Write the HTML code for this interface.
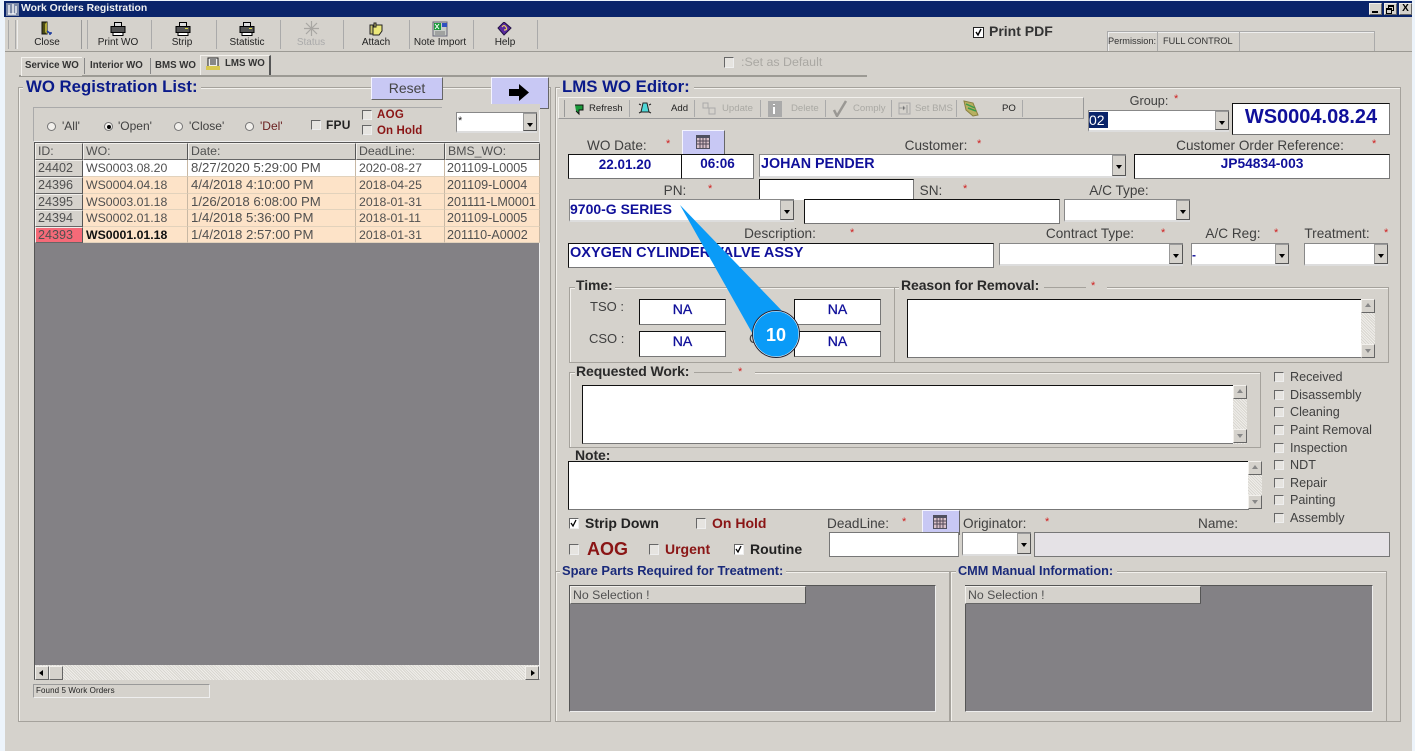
<!DOCTYPE html>
<html><head><meta charset="utf-8"><style>
html,body{margin:0;padding:0}
body{width:1415px;height:751px;overflow:hidden;position:relative;background:#d5d2cc;font-family:"Liberation Sans",sans-serif;color:#333}
div,span.a,svg{position:absolute}
.t{position:absolute;white-space:nowrap;font-size:12px;line-height:14px;color:#404040}
.l{font-size:13.6px}
.k{font-size:12.6px}
.g{font-size:14px;font-weight:bold;color:#2a2a2a;letter-spacing:-.1px}
.c{transform:translateX(-50%)}
.s{font-size:9.6px;color:#222}
.d{font-size:9.6px;color:#aaa9a4}
.r{color:#d02020;font-size:11px}
.b{color:#10109a;font-weight:bold}
.in{background:#fff;border:1px solid #111;border-right-color:#777;border-bottom-color:#777;box-sizing:border-box}
.sel{background:#fff;box-sizing:border-box;border-top:1px solid #888;border-left:1px solid #888;border-bottom:2px solid #ddd}
.sel i{position:absolute;right:0;top:0;bottom:0;width:14px;background:#d5d2cc;border:1px solid #999;box-sizing:border-box;border-right-color:#555;border-bottom-color:#555}
.sel i:after{content:"";position:absolute;left:3px;top:9px;border:3px solid transparent;border-top:4px solid #000}
.gb{box-sizing:border-box;border:1px solid #a5a29c;box-shadow:inset 1px 1px 0 #f2f0ec}
.bg{background:#d5d2cc}
.ln{background:#9c9a94}
.btn{background:#c8c8f4;box-sizing:border-box;border:1px solid;border-color:#f4f4ff #666 #666 #f4f4ff}
.cb{width:9px;height:9px;box-sizing:border-box;background:#e6e4e0;border:1px solid;border-color:#666 #eee #eee #666}
.cb.w{background:#fff}
.sb{background:#e4e2de;background-image:repeating-linear-gradient(45deg,#f0eeea 0 1px,#d8d6d0 1px 2px)}
.ar{background:#d5d2cc;box-sizing:border-box;border:1px solid;border-color:#f2f0ec #666 #666 #f2f0ec}
.cell{box-sizing:border-box;border-right:1px solid #c8b8a4;border-bottom:1px solid #e2d2bc;font-size:12.3px;line-height:16px;padding-left:3px;white-space:nowrap;color:#505050;background:#fde3c8}
.dt{font-size:13.2px}
.bm{font-size:12.6px;padding-left:2px}
.hd{box-sizing:border-box;background:#d5d2cc;border:1px solid;border-color:#f2f0ec #555 #666 #f2f0ec;font-size:12.3px;line-height:15px;padding-left:2px;color:#505050}
.id{box-sizing:border-box;background:#d5d2cc;border:1px solid;border-color:#f2f0ec #555 #666 #f2f0ec;font-size:12.6px;line-height:15px;padding-left:2px;color:#505050}
.rad{width:9px;height:9px;border-radius:50%;background:#f2f0ec;border:1px solid #777;box-sizing:border-box}
.na{font-size:14px;font-weight:normal;-webkit-text-stroke:.3px #10109a}
</style></head><body>
<div style="left:0;top:0;width:5px;height:751px;background:#edf4fb"></div>
<div style="left:1412px;top:0;width:3px;height:751px;background:#edf4fb"></div>
<div style="left:4px;top:1px;width:1408px;height:16px;background:#0a246a"></div>
<div style="left:0;top:0;width:1415px;height:1px;background:#edf4fb"></div>
<svg style="left:6px;top:3px" width="14" height="13"><rect x="0" y="0" width="13" height="13" fill="#7d8aa8"/><path d="M3 2v9M7 1v10M10 3v7M2 11h8" stroke="#fff" stroke-width="1.3" fill="none"/></svg>
<div class="t" style="left:21px;top:2px;color:#f0f0f0;font-weight:bold;font-size:10.4px">Work Orders Registration</div>
<div class="ar" style="left:1369px;top:3px;width:13px;height:12px;background:#d5d2cc"><div style="left:2px;bottom:1px;width:6px;height:2px;background:#000"></div></div>
<div class="ar" style="left:1384px;top:3px;width:13px;height:12px"><div style="left:3px;top:1px;width:6px;height:6px;border:1px solid #000;border-top-width:2px;box-sizing:border-box"></div><div style="left:1px;top:4px;width:6px;height:6px;border:1px solid #000;border-top-width:2px;background:#d5d2cc;box-sizing:border-box"></div></div>
<div class="ar" style="left:1399px;top:3px;width:13px;height:12px;font:bold 10px/10px 'Liberation Sans';color:#000;text-align:center">X</div>

<!-- toolbar -->
<div class="ln" style="left:5px;top:51px;width:1407px;height:1px"></div>
<div style="left:8px;top:20px;width:1px;height:29px;background:#aaa"></div>
<div style="left:15px;top:20px;width:1px;height:29px;background:#aaa"></div>
<div style="left:17px;top:20px;width:1px;height:29px;background:#eee"></div>
<div style="left:81px;top:20px;width:1px;height:29px;background:#999"></div>
<div style="left:87px;top:20px;width:1px;height:29px;background:#aaa"></div>
<div style="left:151px;top:20px;width:1px;height:29px;background:#aaa"></div>
<div style="left:216px;top:20px;width:1px;height:29px;background:#aaa"></div>
<div style="left:280px;top:20px;width:1px;height:29px;background:#aaa"></div>
<div style="left:343px;top:20px;width:1px;height:29px;background:#aaa"></div>
<div style="left:409px;top:20px;width:1px;height:29px;background:#aaa"></div>
<div style="left:473px;top:20px;width:1px;height:29px;background:#aaa"></div>
<div style="left:537px;top:20px;width:1px;height:29px;background:#aaa"></div>

<svg style="left:39px;top:21px" width="16" height="16"><path d="M3 1h5v12H3z" fill="#4a4a14" stroke="#111"/><path d="M8 1l-2 2v8l2 2z" fill="#b0a838"/><path d="M8 10l4 3M12 13l-2 0M12 13l0-2" stroke="#2240a0" stroke-width="1.5" fill="none"/></svg>
<svg style="left:110px;top:22px" width="16" height="14"><path d="M4.500 .500h7v4h-7z" fill="#ddd" stroke="#000"/><path d="M1 4.500h14v6H1z" fill="#555" stroke="#000"/><path d="M3 10.500h10v3H3z" fill="#fff" stroke="#000"/></svg>
<svg style="left:175px;top:22px" width="16" height="14"><path d="M4.500 .500h7v4h-7z" fill="#ddd" stroke="#000"/><path d="M1 4.500h14v6H1z" fill="#555" stroke="#000"/><path d="M3 10.500h10v3H3z" fill="#fff" stroke="#000"/><path d="M10 6h3v1h-3z" fill="#dd4"/></svg>
<svg style="left:239px;top:22px" width="16" height="14"><path d="M4.500 .500h7v4h-7z" fill="#ddd" stroke="#000"/><path d="M1 4.500h14v6H1z" fill="#555" stroke="#000"/><path d="M3 10.500h10v3H3z" fill="#fff" stroke="#000"/><path d="M10 6h3v1h-3z" fill="#dd4"/></svg>
<svg style="left:304px;top:21px" width="15" height="15"><path d="M7.500 0v15M0 7.500h15M2 2l11 11M13 2L2 13" stroke="#a8a6a2" stroke-width="1.2"/></svg>
<svg style="left:368px;top:22px" width="16" height="15"><path d="M5 3h9v6l-3 4H5z" fill="#ece87a" stroke="#222"/><path d="M2 3h3v9H2zM6 1h2v4H6z" fill="#c8c470" stroke="#222"/></svg>
<svg style="left:432px;top:21px" width="16" height="16"><rect x="1" y="1" width="14" height="14" fill="#c8ccc8" stroke="#667"/><rect x="2" y="2" width="7" height="7" fill="#1a9a3a"/><path d="M3 3l4 5M7 3l-4 5" stroke="#fff"/><rect x="10" y="2" width="5" height="4" fill="#3050c0"/><path d="M3 11h10M3 13h10" stroke="#777"/></svg>
<svg style="left:497px;top:22px" width="15" height="14"><path d="M7 0l7 6-7 7-6-7z" fill="#5a2aa0" stroke="#221144"/><path d="M5 5q2-3 4 0t-2 3" stroke="#e8d060" fill="none" stroke-width="1.2"/></svg>

<div class="t s c" style="left:47px;top:36px;font-size:10px">Close</div>
<div class="t s c" style="left:118px;top:36px;font-size:10px">Print WO</div>
<div class="t s c" style="left:182px;top:36px;font-size:10px">Strip</div>
<div class="t s c" style="left:247px;top:36px;font-size:10px">Statistic</div>
<div class="t s c" style="left:311px;top:36px;color:#aaa;font-size:10px">Status</div>
<div class="t s c" style="left:376px;top:36px;font-size:10px">Attach</div>
<div class="t s c" style="left:440px;top:36px;font-size:10px">Note Import</div>
<div class="t s c" style="left:505px;top:36px;font-size:10px">Help</div>

<div class="cb w" style="left:973px;top:27px;width:11px;height:11px;border:1px solid #222"></div>
<svg style="left:973px;top:27px" width="11" height="11"><path d="M3 5l2 3 3-6" stroke="#000" stroke-width="1.4" fill="none"/></svg>
<div class="t" style="left:989px;top:24px;font-size:14px;font-weight:bold;color:#333">Print PDF</div>
<div style="left:1107px;top:31px;width:268px;height:20px;box-sizing:border-box;border:1px solid #aaa;border-bottom:0;box-shadow:inset 1px 1px 0 #eee"></div>
<div style="left:1157px;top:31px;width:1px;height:20px;background:#aaa"></div>
<div style="left:1239px;top:31px;width:1px;height:20px;background:#aaa"></div>
<div class="t" style="left:1108px;top:34px;font-size:9.2px;color:#333">Permission:</div>
<div class="t" style="left:1163px;top:34px;font-size:9.2px;color:#333">FULL CONTROL</div>

<div class="cb" style="left:724px;top:57px;width:10px;height:11px"></div>
<div class="t" style="left:741px;top:55px;color:#aaa8a3;font-size:12.4px">:Set as Default</div>

<!-- tabs -->
<div class="ln" style="left:19px;top:75px;width:848px;height:2px"></div>
<div style="left:21px;top:57px;width:60px;height:18px;background:#d5d2cc;border-top:1px solid #f2f0ec;border-left:1px solid #f2f0ec"></div>
<div style="left:84px;top:58px;width:1px;height:16px;background:#888"></div>
<div style="left:150px;top:58px;width:1px;height:16px;background:#888"></div>
<div style="left:200px;top:55px;width:71px;height:20px;box-sizing:border-box;border:1px solid #f2f0ec;border-right:2px solid #555;border-bottom:0"></div>
<div class="t" style="left:25px;top:59px;font-size:9.7px;font-weight:bold;color:#333">Service WO</div>
<div class="t" style="left:90px;top:59px;font-size:9.7px;font-weight:bold;color:#333">Interior WO</div>
<div class="t" style="left:155px;top:59px;font-size:9.7px;font-weight:bold;color:#333">BMS WO</div>
<div class="t" style="left:225px;top:57px;font-size:9.7px;font-weight:bold;color:#333">LMS WO</div>
<svg style="left:206px;top:57px" width="14" height="13"><rect x="2" y="1" width="10" height="9" fill="#eee" stroke="#222"/><path d="M4 3h6M4 5h6M4 7h6" stroke="#222"/><rect x="0" y="9" width="14" height="4" fill="#d8c850"/></svg>

<!-- left group -->
<div class="gb" style="left:18px;top:87px;width:533px;height:635px"></div>
<div class="bg" style="left:23px;top:80px;width:178px;height:14px"></div>
<div class="t" style="left:26px;top:78px;font-size:16.8px;line-height:18px;font-weight:bold;color:#0a1a8a">WO Registration List:</div>
<div class="btn" style="left:371px;top:77px;width:72px;height:23px"></div>
<div class="t c" style="left:407px;top:81px;font-size:14px;color:#444">Reset</div>
<div class="btn" style="left:491px;top:77px;width:58px;height:32px"></div>
<svg style="left:509px;top:84px" width="20" height="17"><path d="M0 5h10V0l10 8.500L10 17v-5H0z" fill="#000"/></svg>

<div style="left:33px;top:107px;width:507px;height:35px;box-sizing:border-box;border:1px solid #bbb9b3;border-color:#aaa #eee #eee #aaa"></div>
<div class="rad" style="left:47px;top:122px"></div>
<div class="t" style="left:62px;top:119px">'All'</div>
<div class="rad" style="left:104px;top:122px"></div>
<div style="left:106.500px;top:124.500px;width:4px;height:4px;border-radius:50%;background:#000"></div>
<div class="t" style="left:118px;top:119px">'Open'</div>
<div class="rad" style="left:174px;top:122px"></div>
<div class="t" style="left:189px;top:119px">'Close'</div>
<div class="rad" style="left:245px;top:122px"></div>
<div class="t" style="left:260px;top:119px;color:#6a2020">'Del'</div>
<div class="cb" style="left:311px;top:120px;width:10px;height:10px"></div>
<div class="t" style="left:326px;top:118px;font-weight:bold;color:#222;letter-spacing:.2px">FPU</div>
<div class="cb" style="left:362px;top:110px;width:10px;height:10px"></div>
<div class="t" style="left:377px;top:108px;font-weight:bold;font-size:11.5px;color:#8a1515;letter-spacing:.3px">AOG</div>
<div class="cb" style="left:362px;top:125px;width:10px;height:10px"></div>
<div class="t" style="left:377px;top:124px;font-weight:bold;font-size:11.5px;color:#8a1515;letter-spacing:.1px">On Hold</div>
<div class="bg" style="left:442px;top:104px;width:98px;height:6px"></div>
<div class="sel" style="left:456px;top:112px;width:81px;height:21px"><i></i></div>
<div class="t" style="left:458px;top:114px;font-size:11px;color:#222">*</div>

<!-- grid -->
<div style="left:34px;top:142px;width:506px;height:538px;background:#838185;box-sizing:border-box;border:1px solid #555;border-right-color:#eee;border-bottom-color:#777"></div>
<div class="hd" style="left:35px;top:143px;width:48px;height:17px">ID:</div>
<div class="hd" style="left:83px;top:143px;width:105px;height:17px">WO:</div>
<div class="hd" style="left:188px;top:143px;width:168px;height:17px">Date:</div>
<div class="hd" style="left:356px;top:143px;width:89px;height:17px">DeadLine:</div>
<div class="hd" style="left:445px;top:143px;width:95px;height:17px">BMS_WO:</div>

<div class="id" style="left:35px;top:160px;width:48px;height:17px">24402</div>
<div class="cell" style="left:83px;top:160px;width:105px;height:17px;background:#fff">WS0003.08.20</div>
<div class="cell dt" style="left:188px;top:160px;width:168px;height:17px;background:#fff">8/27/2020 5:29:00 PM</div>
<div class="cell" style="left:356px;top:160px;width:89px;height:17px;background:#fff">2020-08-27</div>
<div class="cell bm" style="left:445px;top:160px;width:95px;height:17px;background:#fff">201109-L0005</div>

<div class="id" style="left:35px;top:177px;width:48px;height:17px">24396</div>
<div class="cell" style="left:83px;top:177px;width:105px;height:17px">WS0004.04.18</div>
<div class="cell dt" style="left:188px;top:177px;width:168px;height:17px">4/4/2018 4:10:00 PM</div>
<div class="cell" style="left:356px;top:177px;width:89px;height:17px">2018-04-25</div>
<div class="cell bm" style="left:445px;top:177px;width:95px;height:17px">201109-L0004</div>

<div class="id" style="left:35px;top:194px;width:48px;height:16px">24395</div>
<div class="cell" style="left:83px;top:194px;width:105px;height:16px">WS0003.01.18</div>
<div class="cell dt" style="left:188px;top:194px;width:168px;height:16px">1/26/2018 6:08:00 PM</div>
<div class="cell" style="left:356px;top:194px;width:89px;height:16px">2018-01-31</div>
<div class="cell bm" style="left:445px;top:194px;width:95px;height:16px">201111-LM0001</div>

<div class="id" style="left:35px;top:210px;width:48px;height:17px">24394</div>
<div class="cell" style="left:83px;top:210px;width:105px;height:17px">WS0002.01.18</div>
<div class="cell dt" style="left:188px;top:210px;width:168px;height:17px">1/4/2018 5:36:00 PM</div>
<div class="cell" style="left:356px;top:210px;width:89px;height:17px">2018-01-11</div>
<div class="cell bm" style="left:445px;top:210px;width:95px;height:17px">201109-L0005</div>

<div class="id" style="left:35px;top:227px;width:48px;height:16px;background:#f56a78">24393</div>
<div class="cell" style="left:83px;top:227px;width:105px;height:16px;font-weight:bold;color:#111">WS0001.01.18</div>
<div class="cell dt" style="left:188px;top:227px;width:168px;height:16px">1/4/2018 2:57:00 PM</div>
<div class="cell" style="left:356px;top:227px;width:89px;height:16px">2018-01-31</div>
<div class="cell bm" style="left:445px;top:227px;width:95px;height:16px">201110-A0002</div>

<div class="sb" style="left:35px;top:665px;width:504px;height:15px"></div>
<div class="ar" style="left:35px;top:666px;width:14px;height:14px"><div style="left:3px;top:3px;border:3px solid transparent;border-right:4px solid #000;border-left:0"></div></div>
<div class="ar" style="left:49px;top:666px;width:14px;height:14px"></div>
<div class="ar" style="left:525px;top:666px;width:14px;height:14px"><div style="left:5px;top:3px;border:3px solid transparent;border-left:4px solid #000;border-right:0"></div></div>
<div style="left:33px;top:684px;width:177px;height:14px;box-sizing:border-box;border:1px solid;border-color:#999 #eee #eee #999"></div>
<div class="t" style="left:36px;top:684px;font-size:8px;color:#222;letter-spacing:.1px">Found 5 Work Orders</div>

<!-- right group -->
<div class="gb" style="left:555px;top:87px;width:846px;height:635px"></div>
<div class="bg" style="left:560px;top:80px;width:134px;height:14px"></div>
<div class="t" style="left:562px;top:78px;font-size:16.8px;line-height:18px;font-weight:bold;color:#0a1a8a">LMS WO Editor:</div>

<!-- editor toolbar -->
<div style="left:558px;top:97px;width:526px;height:22px;box-sizing:border-box;border:1px solid;border-color:#f2f0ec #999 #999 #f2f0ec"></div>
<div style="left:564px;top:100px;width:1px;height:17px;background:#999"></div>
<div style="left:629px;top:100px;width:1px;height:17px;background:#aaa"></div>
<div style="left:694px;top:100px;width:1px;height:17px;background:#aaa"></div>
<div style="left:760px;top:100px;width:1px;height:17px;background:#aaa"></div>
<div style="left:825px;top:100px;width:1px;height:17px;background:#aaa"></div>
<div style="left:891px;top:100px;width:1px;height:17px;background:#aaa"></div>
<div style="left:956px;top:100px;width:1px;height:17px;background:#aaa"></div>
<div style="left:1022px;top:100px;width:1px;height:17px;background:#aaa"></div>
<svg style="left:573px;top:102px" width="12" height="14"><path d="M2 3h8v5H6v4L3 9" fill="#1a9a3a" stroke="#111"/></svg>
<svg style="left:638px;top:101px" width="14" height="14"><path d="M5 2h4l2 9H3z" fill="#50d8d8" stroke="#222"/><path d="M1 3l2 1M13 3l-2 1M1 12l2-1M13 12l-2-1" stroke="#222"/></svg>
<svg style="left:702px;top:102px" width="14" height="13"><path d="M1 1h5v5H1zM7 6h6v6H7z" fill="#d5d2cc" stroke="#aaa"/></svg>
<svg style="left:767px;top:100px" width="15" height="17"><rect x="1" y="1" width="14" height="16" fill="#aaa"/><path d="M7 4v1M7 7v7" stroke="#fff" stroke-width="2"/></svg>
<svg style="left:832px;top:100px" width="16" height="17"><path d="M2 10l3 6 9-15" stroke="#9a9894" stroke-width="2.500" fill="none"/></svg>
<svg style="left:898px;top:102px" width="13" height="13"><path d="M1 1h11v11H1z" fill="#d5d2cc" stroke="#aaa"/><path d="M1 6h6M5 4l2 2-2 2M9 3v8" stroke="#999"/></svg>
<svg style="left:963px;top:100px" width="16" height="17"><path d="M1 1l9 2 5 12-5 1L3 10z" fill="#b8b060" stroke="#8a8040"/><path d="M3 4l9 4M5 8l8 3" stroke="#3a9a4a" stroke-width="1.500"/></svg>
<div class="t s" style="left:589px;top:102px">Refresh</div>
<div class="t s" style="left:671px;top:102px">Add</div>
<div class="t d" style="left:722px;top:102px">Update</div>
<div class="t d" style="left:791px;top:102px">Delete</div>
<div class="t d" style="left:853px;top:102px">Comply</div>
<div class="t d" style="left:915px;top:102px">Set BMS</div>
<div class="t s" style="left:1002px;top:102px">PO</div>

<div class="t c" style="left:1149px;top:94px;font-size:12.7px">Group:</div>
<div class="t r" style="left:1174px;top:92px">*</div>
<div class="sel" style="left:1088px;top:110px;width:141px;height:22px"><i></i></div>
<div style="left:1089px;top:112px;width:19px;height:16px;background:#0a246a;color:#fff;font-size:14px;line-height:16px">02</div>
<div class="in" style="left:1232px;top:103px;width:158px;height:32px;text-align:center;font-weight:bold;font-size:20px;line-height:27px;color:#10109a">WS0004.08.24</div>

<div class="t l" style="left:587px;top:139px">WO Date:</div>
<div class="t r" style="left:666px;top:137px">*</div>
<div class="btn" style="left:682px;top:130px;width:43px;height:25px"></div>
<svg style="left:696px;top:135px" width="14" height="14"><rect width="14" height="14" fill="#505060"/><rect x="1" y="3" width="12" height="10" fill="#d8c0c8"/><path d="M1 6h12M1 9h12M4 3v10M7 3v10M10 3v10" stroke="#504858"/></svg>
<div class="in" style="left:568px;top:154px;width:114px;height:25px;text-align:center;font-size:14px;line-height:18px" ><span class="b" style="font-size:13.5px">22.01.20</span></div>
<div class="in" style="left:681px;top:154px;width:73px;height:25px;text-align:center;line-height:18px"><span class="b" style="font-size:13.5px">06:06</span></div>
<div class="t c l" style="left:936px;top:139px">Customer:</div>
<div class="t r" style="left:977px;top:137px">*</div>
<div class="sel" style="left:759px;top:154px;width:367px;height:24px"><i></i></div>
<div class="t b" style="left:761px;top:156px;font-size:14.3px;line-height:17px">JOHAN PENDER</div>
<div class="t c l" style="left:1260px;top:139px">Customer Order Reference:</div>
<div class="t r" style="left:1372px;top:137px">*</div>
<div class="in" style="left:1134px;top:154px;width:256px;height:25px;text-align:center;line-height:18px"><span class="b" style="font-size:13.8px">JP54834-003</span></div>

<div class="t c l" style="left:675px;top:184px">PN:</div>
<div class="t r" style="left:708px;top:182px">*</div>
<div class="in" style="left:759px;top:179px;width:155px;height:21px;border-bottom:0"></div>
<div class="t c l" style="left:931px;top:184px">SN:</div>
<div class="t r" style="left:963px;top:182px">*</div>
<div class="t c l" style="left:1119px;top:184px">A/C Type:</div>
<div class="sel" style="left:569px;top:199px;width:225px;height:23px"><i></i></div>
<div class="t b" style="left:570px;top:202px;font-size:14px">9700-G SERIES</div>
<div class="in" style="left:804px;top:199px;width:256px;height:25px"></div>
<div class="sel" style="left:1064px;top:199px;width:126px;height:23px"><i></i></div>

<div class="t c l" style="left:780px;top:227px">Description:</div>
<div class="t r" style="left:850px;top:226px">*</div>
<div class="t c l" style="left:1090px;top:227px">Contract Type:</div>
<div class="t r" style="left:1161px;top:226px">*</div>
<div class="t c l" style="left:1233px;top:227px">A/C Reg:</div>
<div class="t r" style="left:1274px;top:226px">*</div>
<div class="t c l" style="left:1337px;top:227px">Treatment:</div>
<div class="t r" style="left:1384px;top:226px">*</div>
<div class="in" style="left:568px;top:243px;width:426px;height:25px"></div>
<div class="t b" style="left:570px;top:245px;font-size:14.5px;line-height:16px">OXYGEN CYLINDER VALVE ASSY</div>
<div class="sel" style="left:999px;top:243px;width:184px;height:23px"><i></i></div>
<div class="sel" style="left:1191px;top:243px;width:98px;height:23px"><i></i></div>
<div class="t" style="left:1192px;top:248px;font-weight:bold;color:#10109a">-</div>
<div class="sel" style="left:1304px;top:243px;width:84px;height:23px"><i></i></div>

<!-- time group -->
<div class="gb" style="left:569px;top:287px;width:820px;height:76px"></div>
<div style="left:894px;top:287px;width:1px;height:76px;background:#a5a29c"></div>
<div class="bg" style="left:575px;top:280px;width:40px;height:14px"></div>
<div class="bg" style="left:899px;top:280px;width:208px;height:14px"></div>
<div style="left:1044px;top:287px;width:42px;height:1px;background:#a5a29c"></div>
<div class="t g" style="left:576px;top:278px">Time:</div>
<div class="t g" style="left:901px;top:278px">Reason for Removal:</div>
<div class="t r" style="left:1091px;top:279px">*</div>
<div class="t" style="left:590px;top:300px;font-size:13px">TSO :</div>
<div class="t" style="left:589px;top:332px;font-size:13px">CSO :</div>
<div class="t" style="left:749px;top:332px;font-size:13px">C</div>
<div class="in" style="left:639px;top:299px;width:87px;height:26px;text-align:center;line-height:19px"><span class="b na">NA</span></div>
<div class="in" style="left:639px;top:331px;width:87px;height:26px;text-align:center;line-height:19px"><span class="b na">NA</span></div>
<div class="in" style="left:794px;top:299px;width:87px;height:26px;text-align:center;line-height:19px"><span class="b na">NA</span></div>
<div class="in" style="left:794px;top:331px;width:87px;height:26px;text-align:center;line-height:19px"><span class="b na">NA</span></div>
<div class="in" style="left:907px;top:299px;width:455px;height:59px"></div>
<div class="sb" style="left:1361px;top:299px;width:14px;height:59px"></div>
<div class="ar" style="left:1361px;top:299px;width:14px;height:14px"><div style="left:3px;top:3px;border:3px solid transparent;border-bottom:4px solid #888;border-top:0"></div></div>
<div class="ar" style="left:1361px;top:344px;width:14px;height:14px"><div style="left:3px;top:4px;border:3px solid transparent;border-top:4px solid #888;border-bottom:0"></div></div>

<!-- requested -->
<div class="gb" style="left:569px;top:372px;width:692px;height:76px"></div>
<div class="bg" style="left:575px;top:365px;width:180px;height:14px"></div>
<div style="left:694px;top:372px;width:38px;height:1px;background:#a5a29c"></div>
<div class="t g" style="left:576px;top:364px">Requested Work:</div>
<div class="t r" style="left:738px;top:365px">*</div>
<div class="in" style="left:582px;top:385px;width:652px;height:59px"></div>
<div class="sb" style="left:1233px;top:385px;width:14px;height:59px"></div>
<div class="ar" style="left:1233px;top:385px;width:14px;height:14px"><div style="left:3px;top:3px;border:3px solid transparent;border-bottom:4px solid #888;border-top:0"></div></div>
<div class="ar" style="left:1233px;top:429px;width:14px;height:14px"><div style="left:3px;top:4px;border:3px solid transparent;border-top:4px solid #888;border-bottom:0"></div></div>

<!-- note -->
<div class="t g" style="left:575px;top:448px">Note:</div>
<div class="in" style="left:568px;top:461px;width:681px;height:49px"></div>
<div class="sb" style="left:1248px;top:461px;width:14px;height:48px"></div>
<div class="ar" style="left:1248px;top:461px;width:14px;height:14px"><div style="left:3px;top:3px;border:3px solid transparent;border-bottom:4px solid #888;border-top:0"></div></div>
<div class="ar" style="left:1248px;top:495px;width:14px;height:14px"><div style="left:3px;top:4px;border:3px solid transparent;border-top:4px solid #888;border-bottom:0"></div></div>

<!-- checklist -->
<div class="cb" style="left:1274px;top:372px;width:10px;height:10px"></div><div class="t k" style="left:1290px;top:370px">Received</div>
<div class="cb" style="left:1274px;top:390px;width:10px;height:10px"></div><div class="t k" style="left:1290px;top:388px">Disassembly</div>
<div class="cb" style="left:1274px;top:407px;width:10px;height:10px"></div><div class="t k" style="left:1290px;top:405px">Cleaning</div>
<div class="cb" style="left:1274px;top:425px;width:10px;height:10px"></div><div class="t k" style="left:1290px;top:423px">Paint Removal</div>
<div class="cb" style="left:1274px;top:443px;width:10px;height:10px"></div><div class="t k" style="left:1290px;top:441px">Inspection</div>
<div class="cb" style="left:1274px;top:460px;width:10px;height:10px"></div><div class="t k" style="left:1290px;top:458px">NDT</div>
<div class="cb" style="left:1274px;top:478px;width:10px;height:10px"></div><div class="t k" style="left:1290px;top:476px">Repair</div>
<div class="cb" style="left:1274px;top:495px;width:10px;height:10px"></div><div class="t k" style="left:1290px;top:493px">Painting</div>
<div class="cb" style="left:1274px;top:513px;width:10px;height:10px"></div><div class="t k" style="left:1290px;top:511px">Assembly</div>

<!-- bottom form -->
<div class="cb w" style="left:569px;top:518px;width:10px;height:11px"></div>
<svg style="left:569px;top:518px" width="10" height="11"><path d="M2 5l2 3 3-6" stroke="#000" stroke-width="1.300" fill="none"/></svg>
<div class="t" style="left:585px;top:516px;font-size:14px;font-weight:bold;color:#222">Strip Down</div>
<div class="cb" style="left:696px;top:518px;width:10px;height:11px"></div>
<div class="t" style="left:712px;top:516px;font-size:14px;font-weight:bold;color:#8a1515">On Hold</div>
<div class="cb" style="left:569px;top:544px;width:10px;height:11px"></div>
<div class="t" style="left:587px;top:540px;font-size:18px;line-height:18px;font-weight:bold;color:#8a1515">AOG</div>
<div class="cb" style="left:649px;top:544px;width:10px;height:11px"></div>
<div class="t" style="left:665px;top:542px;font-size:14px;font-weight:bold;color:#8a1515">Urgent</div>
<div class="cb w" style="left:734px;top:544px;width:10px;height:11px"></div>
<svg style="left:734px;top:544px" width="10" height="11"><path d="M2 5l2 3 3-6" stroke="#000" stroke-width="1.300" fill="none"/></svg>
<div class="t" style="left:750px;top:542px;font-size:14px;font-weight:bold;color:#222">Routine</div>
<div class="t l" style="left:827px;top:517px">DeadLine:</div>
<div class="t r" style="left:902px;top:515px">*</div>
<div class="btn" style="left:922px;top:510px;width:38px;height:25px"></div>
<svg style="left:933px;top:515px" width="14" height="14"><rect width="14" height="14" fill="#505060"/><rect x="1" y="3" width="12" height="10" fill="#d8c0c8"/><path d="M1 6h12M1 9h12M4 3v10M7 3v10M10 3v10" stroke="#504858"/></svg>
<div class="t l" style="left:963px;top:517px">Originator:</div>
<div class="t r" style="left:1045px;top:515px">*</div>
<div class="t l" style="left:1198px;top:517px">Name:</div>
<div class="in" style="left:829px;top:532px;width:130px;height:25px;border-top-color:#777;border-left-color:#777;border-right-color:#888"></div>
<div class="sel" style="left:962px;top:532px;width:69px;height:24px"><i></i></div>
<div class="in" style="left:1034px;top:532px;width:356px;height:25px;background:#e5e2e6;border-color:#777"></div>

<!-- lower groups -->
<div class="gb" style="left:555px;top:571px;width:395px;height:151px"></div>
<div class="gb" style="left:950px;top:571px;width:437px;height:151px"></div>
<div class="bg" style="left:560px;top:564px;width:226px;height:14px"></div>
<div class="bg" style="left:956px;top:564px;width:161px;height:14px"></div>
<div class="t" style="left:562px;top:564px;font-size:12.9px;font-weight:bold;color:#1a2a7a">Spare Parts Required for Treatment:</div>
<div class="t" style="left:958px;top:564px;font-size:12.7px;font-weight:bold;color:#1a2a7a">CMM Manual Information:</div>
<div style="left:569px;top:585px;width:367px;height:127px;box-sizing:border-box;background:#838185;border:1px solid #555;border-right-color:#eee;border-bottom-color:#eee"></div>
<div style="left:965px;top:585px;width:408px;height:127px;box-sizing:border-box;background:#838185;border:1px solid #555;border-right-color:#eee;border-bottom-color:#eee"></div>
<div class="hd" style="left:570px;top:586px;width:236px;height:18px;line-height:16px">No Selection !</div>
<div class="hd" style="left:965px;top:586px;width:236px;height:18px;line-height:16px">No Selection !</div>

<!-- callout -->
<svg style="left:670px;top:195px" width="140" height="170"><g transform="translate(-670,-195)"><polygon points="680,205 755,338 786,315" fill="#0a9bf7"/><circle cx="776" cy="334" r="23" fill="#0a9bf7" stroke="#fff" stroke-width="1"/><circle cx="776" cy="334" r="23.500" fill="none" stroke="#223" stroke-width="1"/></g></svg>
<div class="t c" style="left:776px;top:325px;font-size:18px;line-height:20px;font-weight:bold;color:#fff">10</div>
</body></html>
